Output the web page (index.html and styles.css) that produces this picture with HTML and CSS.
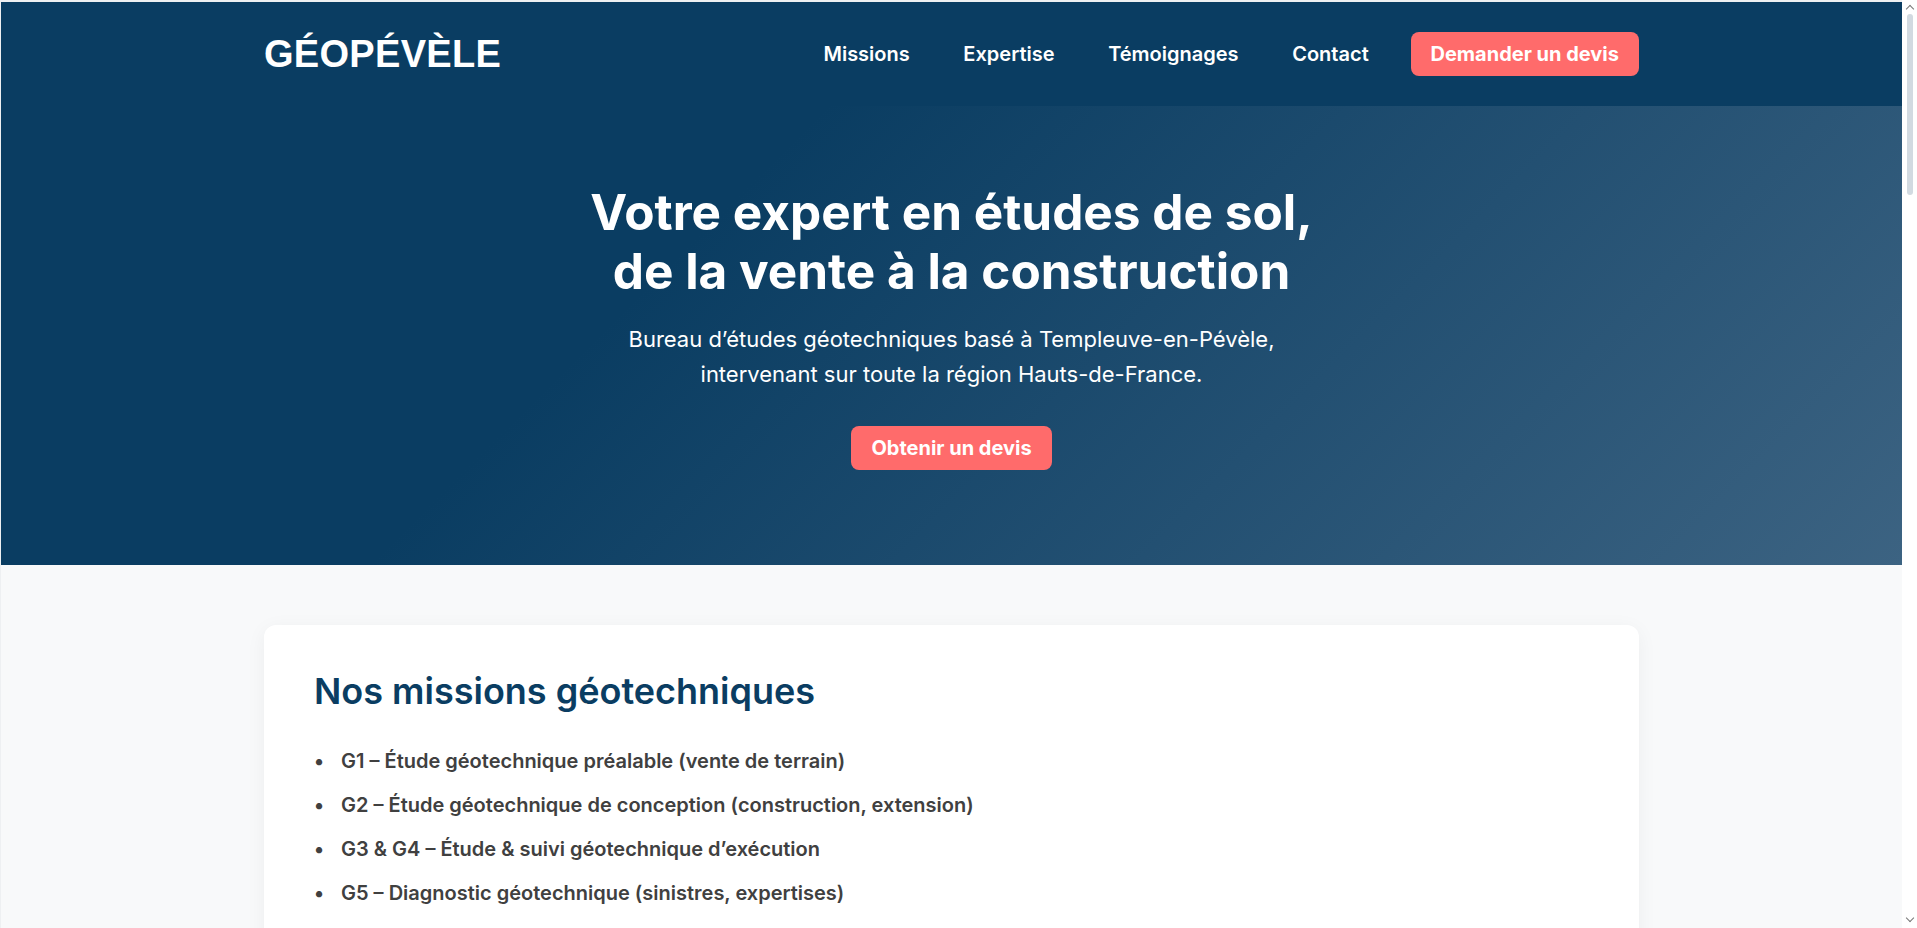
FILE: index.html
```html
<!DOCTYPE html>
<html lang="fr">
<head>
<meta charset="utf-8">
<title>GÉOPÉVÈLE – Études de sol</title>
<link rel="stylesheet" href="styles.css">
</head>
<body>
<header class="site-header">
  <div class="container nav-row">
    <a class="logo" href="#">GÉOPÉVÈLE</a>
    <nav class="nav">
      <a class="nav-link" href="#missions">Missions</a>
      <a class="nav-link" href="#expertise">Expertise</a>
      <a class="nav-link" href="#temoignages">Témoignages</a>
      <a class="nav-link" href="#contact">Contact</a>
      <a class="btn" href="#devis">Demander un devis</a>
    </nav>
  </div>
</header>

<section class="hero">
  <h1 class="hero-title">Votre expert en études de sol,<br>de la vente à la construction</h1>
  <p class="hero-sub">Bureau d’études géotechniques basé à Templeuve-en-Pévèle,<br>intervenant sur toute la région Hauts-de-France.</p>
  <a class="btn" href="#devis">Obtenir un devis</a>
</section>

<main class="content">
  <div class="container">
    <section class="card" id="missions">
      <h2 class="card-title">Nos missions géotechniques</h2>
      <ul class="mission-list">
        <li>G1 – Étude géotechnique préalable (vente de terrain)</li>
        <li>G2 – Étude géotechnique de conception (construction, extension)</li>
        <li>G3 &amp; G4 – Étude &amp; suivi géotechnique d’exécution</li>
        <li>G5 – Diagnostic géotechnique (sinistres, expertises)</li>
      </ul>
    </section>
  </div>
</main>

<div class="scrollbar" aria-hidden="true">
  <span class="scroll-arrow scroll-up"></span>
  <span class="scroll-thumb"></span>
  <span class="scroll-arrow scroll-down"></span>
</div>
</body>
</html>
```

FILE: styles.css
```css
* { box-sizing: border-box; }

html {
  margin: 0;
  padding: 0;
  background: #eef0f2;
}

body {
  margin: 2px 15px 0 1px;
  padding: 0;
  font-family: Inter, "Noto Sans", "Liberation Sans", sans-serif;
  font-size: 20px;
  line-height: 1.6;
  color: #333;
  background: #f8f9fa;
}

a { text-decoration: none; color: inherit; }

.container {
  max-width: 1375px;
  margin: 0 auto;
}

.site-header {
  background: #0a3d62;
  padding: 30px 0;
}

.nav-row {
  display: flex;
  align-items: center;
  justify-content: space-between;
}

.logo {
  font-family: "Liberation Sans", Arial, sans-serif;
  font-weight: 700;
  font-size: 38px;
  line-height: 44px;
  color: #fff;
  letter-spacing: 0.3px;
}

.nav {
  display: flex;
  align-items: center;
  gap: 30px;
}

.nav-link {
  color: #fff;
  font-weight: 600;
  padding: 0 11.8px;
  line-height: 24px;
}

.btn {
  display: inline-block;
  background: #ff6b6b;
  color: #fff;
  font-weight: 700;
  line-height: 24px;
  padding: 10px 20px;
  border-radius: 8px;
}

.hero {
  background: linear-gradient(135deg, #0a3d62 0%, #0a3d62 35%, #3c6382 100%);
  color: #fff;
  text-align: center;
  padding: 77px 20px 95px;
}

.hero-title {
  margin: 0 0 20px;
  font-size: 49.5px;
  line-height: 1.2;
  font-weight: 700;
}

.hero-sub {
  margin: 0 0 34px;
  font-size: 22px;
  line-height: 1.6;
}

.content {
  padding: 60px 0;
}

.card {
  background: #fff;
  border-radius: 12px;
  box-shadow: 0 4px 20px rgba(0, 0, 0, 0.05);
  padding: 43px 50px 50px;
}

.card-title {
  margin: 0 0 30px;
  color: #0a3d62;
  font-size: 36px;
  line-height: 1.3;
  font-weight: 600;
}

.mission-list {
  margin: 0;
  padding: 0;
  list-style: none;
  font-weight: 600;
  color: #404040;
}

.mission-list li {
  margin-bottom: 12px;
}

.mission-list li::before {
  content: "•";
  display: inline-block;
  width: 27px;
}

.scrollbar {
  position: fixed;
  top: 0;
  right: 0;
  width: 15px;
  height: 100%;
  background: #fff;
  display: flex;
  flex-direction: column;
  align-items: center;
}

.scroll-arrow {
  width: 6px;
  height: 6px;
  border-left: 1.5px solid #777;
  border-top: 1.5px solid #777;
}

.scroll-up {
  margin-top: 6px;
  transform: rotate(45deg);
}

.scroll-down {
  margin-top: auto;
  margin-bottom: 7px;
  transform: rotate(225deg);
}

.scroll-thumb {
  margin-top: 2px;
  width: 6px;
  height: 181px;
  border-radius: 3px;
  background: #d2dae1;
}
```
